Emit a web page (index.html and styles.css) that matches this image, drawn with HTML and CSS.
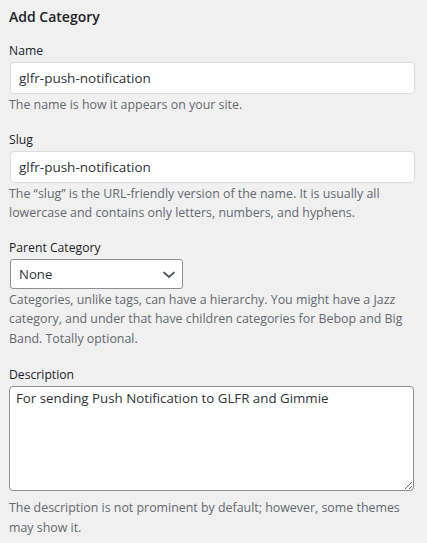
FILE: index.html
```html
<!DOCTYPE html>
<html lang="en">
<head>
<meta charset="utf-8">
<title>Add Category</title>
<link rel="stylesheet" href="styles.css">
</head>
<body>
<div class="form-wrap">
  <h2 class="title">Add Category</h2>
  <div class="field">
    <label class="label" for="tag-name">Name</label>
    <input class="text-input" id="tag-name" type="text" value="glfr-push-notification">
    <p class="description">The name is how it appears on your site.</p>
  </div>
  <div class="field">
    <label class="label" for="tag-slug">Slug</label>
    <input class="text-input" id="tag-slug" type="text" value="glfr-push-notification">
    <p class="description">The “slug” is the URL-friendly version of the name. It is usually all lowercase and contains only letters, numbers, and hyphens.</p>
  </div>
  <div class="field field-parent">
    <label class="label" for="parent">Parent Category</label>
    <div class="select-wrap">
      <select class="select" id="parent">
        <option>None</option>
      </select>
      <svg class="chevron" width="12" height="8" viewBox="0 0 12 8" aria-hidden="true">
        <path d="M1 1.5 L6 6 L11 1.5" fill="none" stroke="#50575e" stroke-width="1.7" stroke-linecap="round" stroke-linejoin="round"/>
      </svg>
    </div>
    <p class="description">Categories, unlike tags, can have a hierarchy. You might have a Jazz category, and under that have children categories for Bebop and Big Band. Totally optional.</p>
  </div>
  <div class="field">
    <label class="label" for="tag-description">Description</label>
    <textarea class="textarea" id="tag-description">For sending Push Notification to GLFR and Gimmie</textarea>
    <p class="description after-textarea">The description is not prominent by default; however, some themes may show it.</p>
  </div>
</div>
</body>
</html>
```
FILE: styles.css
```css
html, body {
  margin: 0;
  padding: 0;
  background: #f0f0f1;
}

body {
  font-family: "Open Sans", "Noto Sans", sans-serif;
  color: #1d2327;
}

.form-wrap {
  width: 405px;
  padding: 7px 0 0 9px;
}

.title {
  margin: 0 0 14px;
  font-size: 14px;
  line-height: 20px;
  font-weight: 600;
}

.field {
  margin-bottom: 15px;
}

.field-parent {
  margin-bottom: 17px;
}

.label {
  display: block;
  font-size: 12.2px;
  line-height: 19px;
  margin-bottom: 2px;
}

.text-input {
  display: block;
  box-sizing: border-box;
  width: 405px;
  height: 32px;
  margin: 0 0 0 1px;
  padding: 0 8px;
  border: 1px solid #dcdcde;
  border-radius: 4px;
  background: #fff;
  font-family: inherit;
  font-size: 13.5px;
  color: #2c3338;
  outline: none;
}

.description {
  margin: 1px 0 0;
  font-size: 12.4px;
  line-height: 19.5px;
  color: #646970;
}

.after-textarea {
  margin-top: 7px;
}

.select-wrap {
  position: relative;
  width: 173px;
  margin-left: 1px;
}

.select {
  display: block;
  box-sizing: border-box;
  width: 173px;
  height: 30px;
  padding: 0 24px 0 8px;
  border: 1px solid #8c8f94;
  border-radius: 3px;
  background: #fff;
  font-family: inherit;
  font-size: 13.2px;
  color: #2c3338;
  -webkit-appearance: none;
  appearance: none;
  outline: none;
}

.chevron {
  position: absolute;
  right: 8px;
  top: 12px;
  pointer-events: none;
}

.textarea {
  display: block;
  box-sizing: border-box;
  width: 405px;
  height: 105px;
  margin: 0;
  padding: 2px 6px;
  border: 1px solid #8c8f94;
  border-radius: 4px;
  background: #fff;
  font-family: inherit;
  font-size: 13.3px;
  line-height: 1.5;
  color: #2c3338;
  resize: vertical;
  outline: none;
}
```
